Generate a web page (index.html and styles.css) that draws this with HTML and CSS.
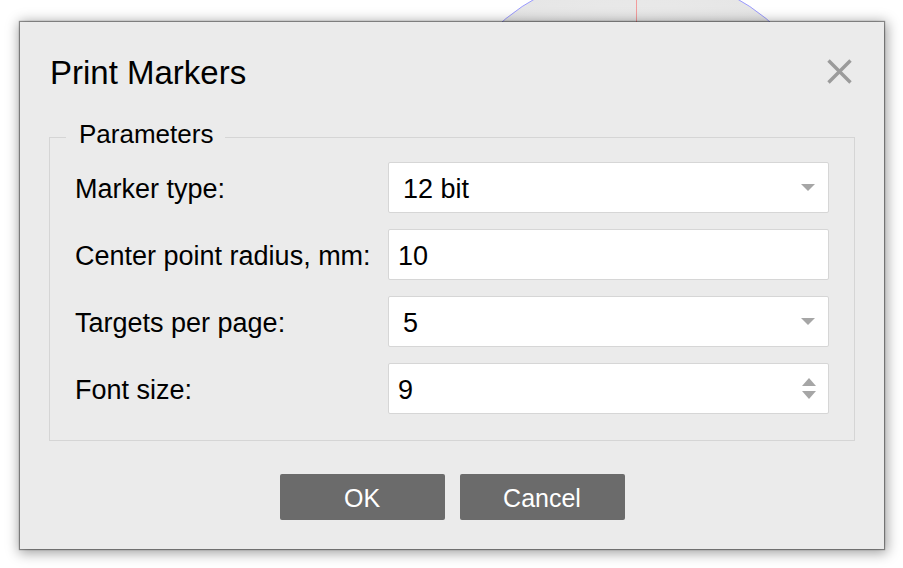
FILE: index.html
```html
<!DOCTYPE html>
<html>
<head>
<meta charset="utf-8">
<link rel="stylesheet" href="styles.css">
</head>
<body>
<svg class="canvas" width="903" height="568" viewBox="0 0 903 568">
  <defs>
    <radialGradient id="g" cx="0.5" cy="0.5" r="0.5">
      <stop offset="0" stop-color="#f3f3f3"/>
      <stop offset="1" stop-color="#e6e6e6"/>
    </radialGradient>
  </defs>
  <circle cx="636" cy="177" r="205" fill="url(#g)" stroke="#9a9aff" stroke-width="1"/>
  <line x1="636.5" y1="0" x2="636.5" y2="200" stroke="#f29c9c" stroke-width="1"/>
</svg>
<div class="dialog">
  <div class="header">
    <div class="title">Print Markers</div>
    <svg class="close" width="25" height="25" viewBox="0 0 25 25">
      <path d="M1.5 1.5 L23.5 23.5 M23.5 1.5 L1.5 23.5" stroke="#9b9b9b" stroke-width="3.4" fill="none"/>
    </svg>
  </div>
  <fieldset class="group">
    <legend class="legend">Parameters</legend>
    <div class="form">
      <div class="label">Marker type:</div>
      <div class="field combo"><span class="value">12 bit</span><span class="arrow-down"></span></div>
      <div class="label">Center point radius, mm:</div>
      <div class="field edit"><span class="value">10</span></div>
      <div class="label">Targets per page:</div>
      <div class="field combo"><span class="value">5</span><span class="arrow-down"></span></div>
      <div class="label">Font size:</div>
      <div class="field edit spin"><span class="value">9</span><span class="spinner"><span class="arrow-up"></span><span class="arrow-down small"></span></span></div>
    </div>
  </fieldset>
  <div class="buttons">
    <div class="btn">OK</div>
    <div class="btn">Cancel</div>
  </div>
</div>
</body>
</html>
```
FILE: styles.css
```css
html, body {
  margin: 0;
  background: #ffffff;
}
body {
  width: 903px;
  height: 568px;
  padding: 22px 0 0 20px;
  box-sizing: border-box;
  position: relative;
  overflow: hidden;
  font-family: "Liberation Sans", Arial, sans-serif;
  color: #000;
}
.canvas {
  position: absolute;
  left: 0;
  top: 0;
}
.dialog {
  position: relative;
  width: 864px;
  height: 527px;
  box-sizing: border-box;
  background: #ebebeb;
  padding: 0 29px;
  display: flex;
  flex-direction: column;
  box-shadow: 0 0 1px 1px rgba(0,0,0,0.4), 1px 2px 12px 2px rgba(0,0,0,0.38);
}
.header {
  display: flex;
  justify-content: space-between;
  align-items: center;
  padding-top: 31px;
  height: 40px;
  box-sizing: content-box;
}
.title {
  font-size: 33px;
  line-height: 40px;
  margin-left: 1px;
}
.close {
  margin-right: 3px;
  margin-top: -3px;
}
.group {
  margin: 26px 0 0 0;
  border: 1px solid #d5d5d5;
  padding: 7px 25px 26px 25px;
  min-width: 0;
}
.legend {
  font-size: 26px;
  line-height: 30px;
  padding: 0 12px 6px 13px;
  margin-left: -9px;
}
.form {
  display: grid;
  grid-template-columns: 313px 1fr;
  grid-auto-rows: 51px;
  row-gap: 16px;
  align-items: center;
}
.label {
  font-size: 27px;
  line-height: 32px;
  padding-top: 3px;
}
.field {
  height: 51px;
  box-sizing: border-box;
  background: #fff;
  border: 1px solid #d6d6d6;
  border-radius: 2px;
  display: flex;
  align-items: center;
  justify-content: space-between;
  font-size: 27px;
  line-height: 32px;
  padding-right: 13px;
}
.value {
  padding-top: 3px;
}
.combo {
  padding-left: 14px;
}
.edit {
  padding-left: 9px;
}
.arrow-down {
  width: 0;
  height: 0;
  border-left: 7px solid transparent;
  border-right: 7px solid transparent;
  border-top: 7px solid #a6a6a6;
}
.arrow-up {
  width: 0;
  height: 0;
  border-left: 7px solid transparent;
  border-right: 7px solid transparent;
  border-bottom: 8px solid #a6a6a6;
}
.arrow-down.small {
  border-top-width: 8px;
}
.spinner {
  display: flex;
  flex-direction: column;
  gap: 5px;
  margin-right: -1px;
}
.buttons {
  display: flex;
  justify-content: center;
  gap: 15px;
  margin-top: 33px;
}
.btn {
  width: 165px;
  height: 46px;
  background: #6b6b6b;
  border-radius: 2px;
  color: #fff;
  font-size: 25px;
  padding-top: 2px;
  box-sizing: border-box;
  display: flex;
  align-items: center;
  justify-content: center;
}
```
